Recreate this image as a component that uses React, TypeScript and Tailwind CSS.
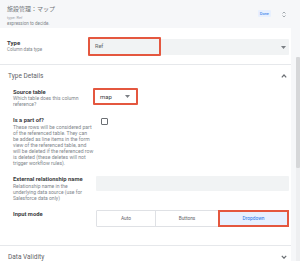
import React from 'react';

// small filled caret used in the select fields
const Caret = () => (
    <svg width="5" height="3" viewBox="0 0 5 3" className="shrink-0">
        <path d="M0 0 L5 0 L2.5 3 Z" fill="#7b7f84" />
    </svg>
);

const Chevron = ({ up }: { up?: boolean }) => (
    <svg width="6" height="4" viewBox="0 0 6 4" className="shrink-0">
        <path d={up ? 'M0.8 3.4 L3 1 L5.2 3.4' : 'M0.8 0.8 L3 3.2 L5.2 0.8'} fill="none" stroke="#6b6f74" strokeWidth="1.2" />
    </svg>
);

const IS_PART_LINES = [
    'These rows will be considered part',
    'of the referenced table. They can',
    'be added as line items in the form',
    'view of the referenced table, and',
    'will be deleted if the referenced row',
    'is deleted (these deletes will not',
    'trigger workflow rules).',
];

export default function App() {
    return (
        <div className="w-[300px] h-[261px] overflow-hidden bg-[#f6f7f9] flex font-[Roboto,'Noto_Sans_CJK_JP',sans-serif]">
            <div className="w-[294px] flex flex-col">
                {/* ヘッダー */}
                <div className="h-[28px] pl-[7px] pr-[8px] pt-[5px] flex justify-between">
                    <div>
                        <div className="text-[6px] leading-[8px] text-[#6f7378] font-['Noto_Sans_CJK_JP',sans-serif]">施設管理：マップ</div>
                        <div className="text-[4px] leading-[5px] mt-[2px] text-[#9aa0a6]">type: Ref</div>
                        <div className="text-[4.5px] leading-[6px] mt-[1px] text-[#80868b]">expression to decide.</div>
                    </div>
                    <div className="flex items-start gap-[11px] pt-[5px]">
                        <div className="h-[7px] px-[2px] bg-[#e8f0fe] text-[#1a73e8] text-[4px] leading-[7px] rounded-[1px]">Done</div>
                        <div className="flex flex-col items-center gap-[1px] pt-[0.5px]">
                            <svg width="4" height="3" viewBox="0 0 4 3"><path d="M0.5 2.5 L2 1 L3.5 2.5" fill="none" stroke="#9aa0a6" strokeWidth="0.9" /></svg>
                            <svg width="4" height="3" viewBox="0 0 4 3"><path d="M0.5 0.5 L2 2 L3.5 0.5" fill="none" stroke="#9aa0a6" strokeWidth="0.9" /></svg>
                        </div>
                    </div>
                </div>

                {/* Type */}
                <div className="w-[291px] h-[37px] bg-white border-b border-[#e6e8eb] pl-[7px] pr-[2px] pt-[11px] flex">
                    <div className="w-[81px]">
                        <div className="text-[6px] leading-[8px] font-bold text-[#3c4043]">Type</div>
                        <div className="text-[4.5px] leading-[6px] text-[#80868b]">Column data type</div>
                    </div>
                    <div className="flex-1 h-[16px] bg-[#f1f3f4] rounded-[1px] relative flex items-center justify-end pr-[3px]">
                        <div className="absolute left-0 -top-[2px] w-[73px] h-[19px] border-2 border-[#e4573f] rounded-[1px] flex items-center pl-[5px]">
                            <span className="text-[5.5px] text-[#5f6368]">Ref</span>
                        </div>
                        <Caret />
                    </div>
                </div>

                {/* Type Details */}
                <div className="w-[291px] h-[181px] bg-white border-b border-[#e6e8eb] pr-[2px]">
                    <div className="h-[15px] pl-[8px] pr-[2px] pt-[7px] flex justify-between items-start">
                        <div className="text-[6.5px] leading-[8px] text-[#5f6368]">Type Details</div>
                        <div className="pt-[2px]"><Chevron up /></div>
                    </div>

                    {/* Source table */}
                    <div className="mt-[8px] h-[20px] pl-[13px] flex">
                        <div className="w-[80px] pt-[1px]">
                            <div className="text-[5.8px] leading-[7px] font-bold text-[#3c4043]">Source table</div>
                            <div className="text-[5px] leading-[5.5px] text-[#80868b]">Which table does this column<br />reference?</div>
                        </div>
                        <div className="w-[45px] h-[17px] border-2 border-[#e4573f] rounded-[1px] flex items-center justify-between pl-[5px] pr-[6px]">
                            <span className="text-[6px] text-[#3c4043]">map</span>
                            <Caret />
                        </div>
                    </div>

                    {/* Is a part of? */}
                    <div className="mt-[9px] pl-[13px] flex">
                        <div className="w-[88px]">
                            <div className="text-[5.8px] leading-[7px] font-bold text-[#3c4043]">Is a part of?</div>
                            <div className="text-[5.1px] leading-[6px] text-[#80868b]">
                                {IS_PART_LINES.map((l) => (
                                    <div key={l} className="whitespace-nowrap">{l}</div>
                                ))}
                            </div>
                        </div>
                        <div className="mt-[1px] w-[7px] h-[7px] border border-[#6b6f74] rounded-[1px]" />
                    </div>

                    {/* External relationship name */}
                    <div className="mt-[10px] pl-[13px] flex">
                        <div className="w-[83px]">
                            <div className="text-[5.8px] leading-[7px] font-bold text-[#3c4043] whitespace-nowrap">External relationship name</div>
                            <div className="text-[5px] leading-[6px] text-[#80868b]">
                                <div>Relationship name in the</div>
                                <div>underlying data source (use for</div>
                                <div>Salesforce data only)</div>
                            </div>
                        </div>
                        <div className="flex-1 h-[15px] bg-[#f1f3f4] rounded-[1px]" />
                    </div>

                    {/* Input mode */}
                    <div className="mt-[9px] pl-[13px] flex">
                        <div className="w-[83px] pt-[1px]">
                            <div className="text-[5.8px] leading-[7px] font-bold text-[#3c4043]">Input mode</div>
                        </div>
                        <div className="flex-1 h-[17px] flex border border-[#dfe1e5] rounded-[1px]">
                            <div className="w-[58px] flex items-center justify-center text-[4.8px] text-[#5f6368]">Auto</div>
                            <div className="w-[63px] border-l border-[#dfe1e5] flex items-center justify-center text-[4.8px] text-[#5f6368]">Buttons</div>
                            <div className="flex-1 -my-[1px] -mr-[1px] bg-[#e8f0fe] border-2 border-[#e4573f] flex items-center justify-center text-[4.8px] text-[#1a73e8]">Dropdown</div>
                        </div>
                    </div>
                </div>

                {/* Data Validity */}
                <div className="w-[291px] flex-1 bg-white pl-[8px] pr-[4px] pt-[7px] flex justify-between items-start">
                    <div className="text-[6.5px] leading-[8px] text-[#5f6368]">Data Validity</div>
                    <div className="pt-[2px]"><Chevron /></div>
                </div>
            </div>

            {/* スクロールバー */}
            <div className="w-[6px] flex flex-col">
                <div className="h-[57px]" />
                <div className="ml-[2px] w-[4px] h-[111px] bg-[#d6d7d9] rounded-[1px]" />
                <div className="ml-[2px] w-[4px] flex-1 bg-[#eeeff1]" />
            </div>
        </div>
    );
}
